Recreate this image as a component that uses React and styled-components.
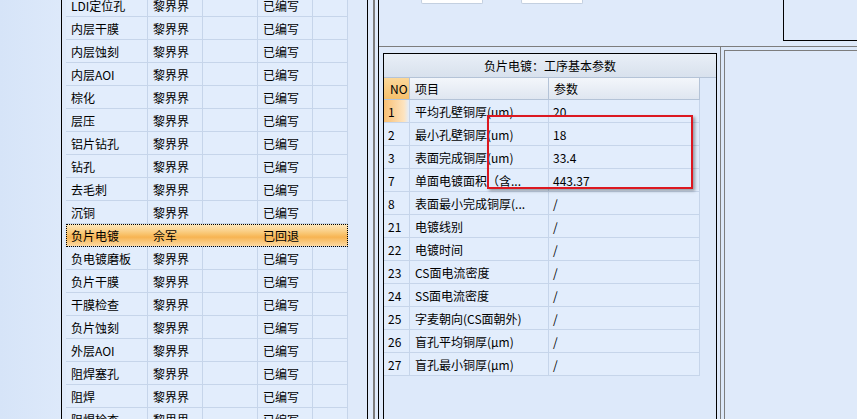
import styled, { createGlobalStyle } from 'styled-components'

const Global = createGlobalStyle`
  html, body { margin: 0; padding: 0; }
  body {
    font-family: "Noto Sans CJK SC", "Liberation Sans", sans-serif;
    font-size: 12px;
    color: #000;
    background: #dce8f9;
  }
`

const Screen = styled.div`
  position: relative;
  display: flex;
  width: 857px;
  height: 419px;
  overflow: hidden;
  background: #dce8f9;
`

const LeftPane = styled.div`
  width: 368px;
  padding-left: 61px;
  box-sizing: border-box;
  display: flex;
  background: linear-gradient(90deg, #d6e4f8, #dde9fa 61px);
`

const ListFrame = styled.div`
  flex: 1;
  border-left: 1px solid #000;
  border-right: 1px solid #000;
  padding-left: 4px;
  background: #dfeafa;
  overflow: hidden;
`

const List = styled.div`
  margin-top: -6px;
  width: 282px;
`

const ListRow = styled.div`
  display: grid;
  grid-template-columns: 82px 55px 55px 55px 35px;
  height: 23px;
  box-sizing: border-box;
  border-bottom: 1px solid #c6d5ea;
  background: ${p => p.$active
    ? 'linear-gradient(#fdebc4, #f9c46e 45%, #f7b452 60%, #fcd9a2)'
    : '#e2edfc'};
  outline: ${p => (p.$active ? '1px dotted #000' : 'none')};
  outline-offset: -1px;
`

const Cell = styled.div`
  display: flex;
  align-items: center;
  padding-left: ${p => p.$pad ?? 5}px;
  border-right: ${p => (p.$active ? '0' : '1px solid #c6d5ea')};
  white-space: nowrap;
  overflow: hidden;
`

const Splitter = styled.div`
  width: 10px;
  background: linear-gradient(90deg, #dfeafa 5px, #7d7d7d 5px, #7d7d7d 7px, #dfeafa 7px);
`

const RightPane = styled.div`
  flex: 1;
  display: flex;
  flex-direction: column;
  border-left: 1px solid #000;
`

const TopBar = styled.div`
  height: 46px;
  display: flex;
  align-items: flex-start;
  border-bottom: 1px solid #7d7d7d;
  background: #dfeafa;
`

const StubButton = styled.div`
  width: 60px;
  height: 3px;
  margin-left: ${p => p.$ml}px;
  background: #fff;
  border: 1px solid #c4d0e0;
  border-top: 0;
  border-radius: 0 0 2px 2px;
`

const TopBox = styled.div`
  margin-left: auto;
  width: 73px;
  height: 40px;
  border-left: 1px solid #000;
  border-bottom: 1px solid #000;
`

const Body = styled.div`
  flex: 1;
  display: flex;
`

const ParamGroup = styled.div`
  width: 342px;
  box-sizing: border-box;
  padding: 6px 3px 0 4px;
  border-right: 1px solid #7d7d7d;
  background: #dfeafa;
`

const ParamBox = styled.div`
  height: 100%;
  border: 1px solid #000;
  border-bottom: 0;
  background: #dde9fa;
`

const Title = styled.div`
  height: 24px;
  display: flex;
  align-items: center;
  justify-content: center;
  background: linear-gradient(#e9eff7, #d8e1ed);
  border-bottom: 1px solid #b4c3d7;
  box-sizing: border-box;
`

const Grid = styled.div`
  width: 316px;
`

const GridRow = styled.div`
  display: grid;
  grid-template-columns: 26px 139px 151px;
  height: ${p => (p.$head ? 22 : 23)}px;
  box-sizing: border-box;
  border-bottom: 1px solid ${p => (p.$head ? '#b4c3d7' : '#c6d5ea')};
  background: ${p => (p.$head ? 'linear-gradient(#f3f6fb, #dfe6f0)' : '#e2edfc')};
`

const GridCell = styled.div`
  display: flex;
  align-items: center;
  padding-left: ${p => p.$pad ?? 5}px;
  border-right: 1px solid ${p => (p.$head ? '#b4c3d7' : '#c6d5ea')};
  white-space: nowrap;
  overflow: hidden;
  background: ${p => p.$bg || 'transparent'};
`

const RightGroup = styled.div`
  flex: 1;
  margin: 3px 0 0 3px;
  border-left: 1px solid #7d7d7d;
  border-top: 1px solid #7d7d7d;
  background: #dfeafa;
`

const Mark = styled.div`
  position: absolute;
  left: 487px;
  top: 115px;
  width: 206px;
  height: 74px;
  box-sizing: border-box;
  border: 2px solid #dc1820;
  box-shadow: 2px 2px 3px rgba(0, 0, 0, 0.35);
`

const steps = [
  'LDI定位孔', '内层干膜', '内层蚀刻', '内层AOI', '棕化', '层压', '铝片钻孔', '钻孔',
  '去毛刺', '沉铜', '负片电镀', '负电镀磨板', '负片干膜', '干膜检查', '负片蚀刻',
  '外层AOI', '阻焊塞孔', '阻焊', '阻焊检查',
]

const params = [
  ['1', '平均孔壁铜厚(um)', '20'],
  ['2', '最小孔壁铜厚(um)', '18'],
  ['3', '表面完成铜厚(um)', '33.4'],
  ['7', '单面电镀面积（含...', '443.37'],
  ['8', '表面最小完成铜厚(...', '/'],
  ['21', '电镀线别', '/'],
  ['22', '电镀时间', '/'],
  ['23', 'CS面电流密度', '/'],
  ['24', 'SS面电流密度', '/'],
  ['25', '字麦朝向(CS面朝外)', '/'],
  ['26', '盲孔平均铜厚(μm)', '/'],
  ['27', '盲孔最小铜厚(μm)', '/'],
]

export default function App() {
  return (
    <Screen>
      <Global />
      <LeftPane>
        <ListFrame>
          <List>
            {steps.map(name => {
              const active = name === '负片电镀'
              return (
                <ListRow key={name} $active={active}>
                  <Cell $active={active}>{name}</Cell>
                  <Cell $active={active}>{active ? '佘军' : '黎界界'}</Cell>
                  <Cell $active={active} />
                  <Cell $active={active}>{active ? '已回退' : '已编写'}</Cell>
                  <Cell $active={active} />
                </ListRow>
              )
            })}
          </List>
        </ListFrame>
      </LeftPane>
      <Splitter />
      <RightPane>
        <TopBar>
          <StubButton $ml={42} />
          <StubButton $ml={38} />
          <TopBox />
        </TopBar>
        <Body>
          <ParamGroup>
            <ParamBox>
              <Title>负片电镀：工序基本参数</Title>
              <Grid>
                <GridRow $head>
                  <GridCell $head $pad={6} $bg="linear-gradient(#fbd89a, #f6c06c)">NO</GridCell>
                  <GridCell $head>项目</GridCell>
                  <GridCell $head>参数</GridCell>
                </GridRow>
                {params.map(([no, item, val], i) => (
                  <GridRow key={no}>
                    <GridCell
                      $pad={4}
                      $bg={i === 0 ? 'linear-gradient(90deg, #f8bf73, #fde4c0 80%, #e2edfc)' : undefined}
                    >
                      {no}
                    </GridCell>
                    <GridCell>{item}</GridCell>
                    <GridCell $pad={4}>{val}</GridCell>
                  </GridRow>
                ))}
              </Grid>
            </ParamBox>
          </ParamGroup>
          <RightGroup />
        </Body>
      </RightPane>
      <Mark />
    </Screen>
  )
}
